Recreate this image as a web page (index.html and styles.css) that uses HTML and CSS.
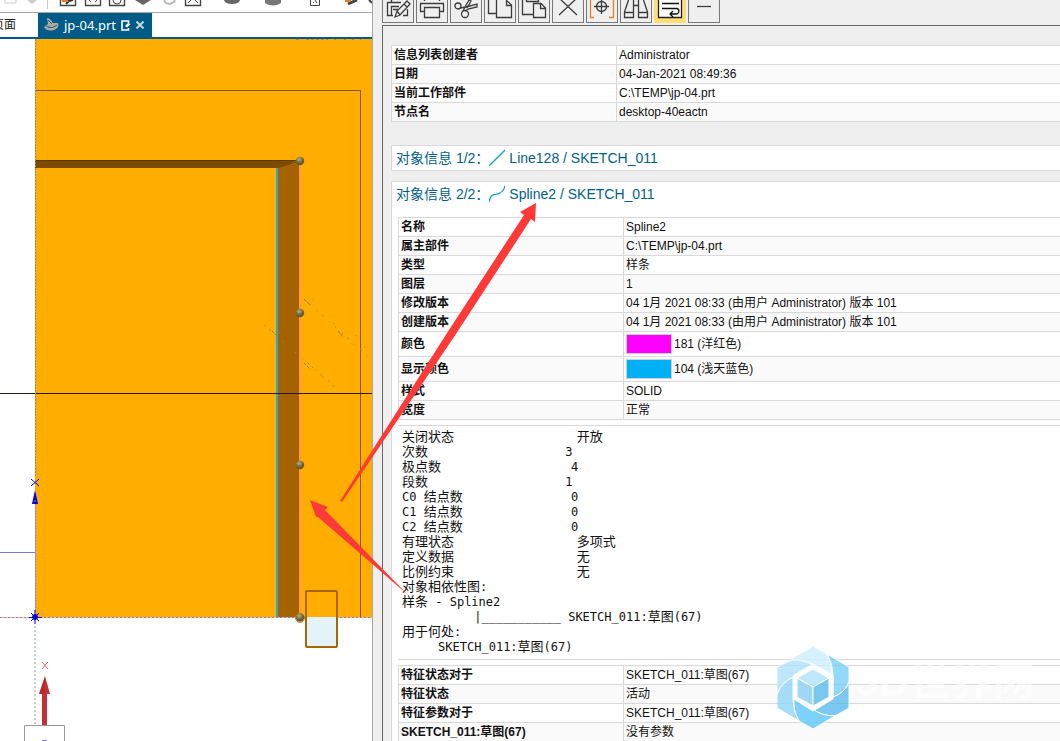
FILE: index.html
```
<!DOCTYPE html>
<html lang="zh-CN">
<head>
<meta charset="utf-8">
<title>jp-04.prt</title>
<link rel="stylesheet" href="styles.css">
</head>
<body>
<div class="app">
  <section class="modeler">
    <div class="ribbon">
      <svg width="372" height="12" viewBox="0 0 372 12" fill="none" aria-hidden="true">
        <path d="M5 0V3H16V0" stroke="#ccc"/>
        <path d="M27 0L32 4L37 0Z" fill="#ccc"/>
        <path d="M47.500 0V9" stroke="#ccc"/>
        <path d="M60.500 0V5.500H75.500V0M85.500 0V5.500H100.500V0M109.500 0V5.500H124.500V0M185.500 0V5.500H200.500V0" stroke="#444" stroke-width="1.400"/>
        <path d="M66 4L69 1L73 0" stroke="#333" stroke-width="2"/>
        <path d="M62 1H68" stroke="#e87a20" stroke-width="2"/>
        <path d="M89 0L91 2M97 0L95 2M188 3L191 0M198 3L195 0" stroke="#444"/>
        <path d="M113 0A4 4 0 0 0 121 0" stroke="#444"/>
        <path d="M135 0L143 5L151 0Z" fill="#666"/>
        <path d="M164 0L166 3L170 4L174 2L175 0" stroke="#bbb" stroke-width="2"/>
        <path d="M224 0Q225 4 232 4T240 0Z" fill="#666"/>
        <path d="M265 0V3Q273 8 281 3V0Z" fill="#777"/>
        <path d="M310.500 0V5.500H319.500V0M313 3L314 2M315 0L317 3" stroke="#444"/>
        <path d="M348 4L357 0" stroke="#444" stroke-width="3"/>
        <path d="M345 1H351" stroke="#e87a20" stroke-width="2"/>
        <path d="M369 0L372 3" stroke="#444" stroke-width="2"/>
      </svg>
    </div>
    <nav class="tabs">
      <a class="tab" href="#page">页面</a>
      <a class="tab active" href="#part">
        <svg width="15" height="14" viewBox="0 0 15 14" aria-hidden="true"><path d="M3 0Q6 0 9 5L14 5Q16 9 10 12Q3 14 0 9L4 6Z" fill="#a8aaac"/><path d="M4 2L8 6M4 9Q9 11 13 7M2 8L6 10" stroke="#555" fill="none"/></svg>
        <span>jp-04.prt</span>
        <svg width="10" height="11" viewBox="0 0 10 11" fill="none" aria-hidden="true"><path d="M7.500 3V1H1V10H7.500V8" stroke="#fff" stroke-width="1.600"/><path d="M4 6L7 3L9.500 4L6 7.500Z" fill="#fff"/></svg>
        <svg width="8" height="8" viewBox="0 0 8 8" aria-hidden="true"><path d="M0.500 0.500L7.500 7.500M7.500 0.500L0.500 7.500" stroke="#c4d5dd" stroke-width="2"/></svg>
      </a>
    </nav>
    <div class="viewport">
      <svg width="372" height="702" viewBox="0 39 372 702" fill="none" role="img" aria-label="零件视图">
        <defs><radialGradient id="ball" cx=".4" cy=".3"><stop offset="0" stop-color="#b8ad78"/><stop offset="1" stop-color="#655b34"/></radialGradient></defs>
        <rect x="35" y="39" width="337" height="578" fill="#ffae00"/>
        <path d="M296 39.500H300M306 39.500H328M334 39.500H336M344 39.500H346M352 39.500H354M360 39.500H361" stroke="#a78c58" stroke-dasharray="3 2"/>
        <path d="M35 90.500H360.500V617" stroke="#87570a"/>
        <path d="M35 160H299L280 168H35Z" fill="#7d4a00"/>
        <path d="M35 160.500H299M280 168L299 161" stroke="#5c3900"/>
        <path d="M278 168L299 162V617H278Z" fill="#a46200"/>
        <path d="M277 168V617" stroke="#25a7e0" stroke-width="2"/>
        <path d="M300 162V617" stroke="#ff9848" stroke-width="2"/>
        <path d="M0 393.500H372" stroke="#241b0b"/>
        <g stroke="#98835d" stroke-dasharray="1 6 2 8">
          <path d="M304 299L368 356M264 325L334 386"/>
          <path d="M333 323L356 348M312 367L335 388M356 335L371 356" stroke-dasharray="1 13"/>
        </g>
        <path d="M304 299L310 305M338 331L343 337M304 363L310 369M272 331L278 337" stroke="#887c66" stroke-dasharray="3 1"/>
        <path d="M35.500 39V476" stroke="#8a8877" stroke-dasharray="2 1"/>
        <path d="M35.500 500V612" stroke="#8880ff"/>
        <path d="M35.500 500V612" stroke="#aaa" stroke-dasharray="1 2"/>
        <path d="M0 552.500H35" stroke="#7777ff"/>
        <path d="M0 617.500H372" stroke="#ffb09a"/>
        <path d="M0 617.500H372" stroke="#8985bb" stroke-dasharray="2 2"/>
        <path d="M35 626V724" stroke="#c4d4c4" stroke-width="2" stroke-dasharray="2 2"/>
        <path d="M31 479L39 486M39 479L31 486M29 617.500H42M35 610V624M31 613L39 621M39 613L31 621" stroke="#0000ee"/>
        <path d="M35 490L38 504H32Z" fill="#0000e8"/><path d="M35 500V502" stroke="#d69f23"/>
        <circle cx="35" cy="617" r="2.500" fill="#111196" stroke="#0000e8"/>
        <path d="M42 662L48 669M48 662L42 669" stroke="#d46464"/>
        <path d="M45 676L50 694H47V725H42V694H39Z" fill="#c43036"/>
        <path d="M45 676V694H39Z" fill="#9e282e" fill-opacity=".4"/>
        <path d="M24.500 741V725.500H64.500V741" fill="#fff" stroke="#999"/>
        <path d="M42 741H47" stroke="#7777ff" stroke-width="2"/>
        <rect x="306" y="617" width="31" height="30" fill="#e4f3f7"/>
        <rect x="306" y="591" width="31" height="56" rx="1" stroke="#a66600" stroke-width="2"/>
        <circle cx="300" cy="618" r="4.500" stroke="#d07820"/>
        <g fill="url(#ball)"><circle cx="300" cy="161" r="4.200"/><circle cx="300" cy="313" r="4.200"/><circle cx="300" cy="465" r="4.200"/><circle cx="300" cy="617.500" r="4.200"/></g>
      </svg>
    </div>
  </section>

  <section class="info">
    <div class="toolbar">
      <button aria-label="编辑"><svg viewBox="0 0 30 22"><path d="M4.500 2V15.500H10M24.500 9V15.500H20M4.500 2.500H8.500V0M8.500 2.500H18M8.500 15V6.500H16M10 9.500H15"/><path d="M12 17L14 11L24 1L27 4L17 15ZM14 11L17 15M21 4L24 7" fill="#efefef"/></svg></button>
      <button aria-label="打印"><svg viewBox="0 0 30 22"><path d="M7 11.500H3.500V3.500H26.500V11.500H23M7.500 7.500H22.500V17.500H7.500ZM7.500 0V1M22.500 0V1"/></svg></button>
      <button aria-label="剪切"><svg viewBox="0 0 30 22"><circle cx="7" cy="6" r="3"/><circle cx="14" cy="14" r="3.500"/><path d="M9 8L15 7L26 4V7L17 9L14 11M12 11L14 7L18 0L20 1L16 8"/></svg></button>
      <button aria-label="复制"><svg viewBox="0 0 30 22"><path d="M11 13.500H3.500V0M11.500 0V17.500H26.500V5L21 0M21.500 0V5.500H26"/></svg></button>
      <button aria-label="粘贴"><svg viewBox="0 0 30 22"><path d="M14 14.500H3.500V0M19.500 0V1.500H7.500V0M14.500 17.500V3.500H22L26.500 8V17.500ZM21.500 4V8.500H26"/></svg></button>
      <button aria-label="删除"><svg viewBox="0 0 30 22"><path d="M6 -2L24 15M24 -2L6 15"/></svg></button>
      <button aria-label="定位"><svg viewBox="0 0 30 22"><circle cx="14.500" cy="6.500" r="5"/><path d="M7 6.500H22M14.500 0V14"/><path d="M7 17.500H3.500V0M22 17.500H26.500V0" stroke="#e78022"/></svg></button>
      <button aria-label="查找"><svg viewBox="0 0 30 22"><path d="M3.500 12L7.500 0M3.500 12.500H12.500V17.500H3.500ZM12.500 13V0M17.500 0V17.500H26.500V12.500H17.500M26.500 12L22.500 0M13 5.500H17"/></svg></button>
      <button class="on" aria-label="自动换行"><svg viewBox="0 0 30 22"><path d="M3.500 -1H26.500V17.500H3.500Z" fill="#fff" stroke="#222"/><path d="M7 3.500H24M7 8.500H22Q24 9 24 11T22 14H15M18 11L15 14L18 17" stroke="#111"/></svg></button>
      <button aria-label="最小化"><svg viewBox="0 0 30 22"><path d="M8 6.500H22"/></svg></button>
    </div>
    <main class="listing">
      <table class="props">
        <tr><th scope="row">信息列表创建者</th><td>Administrator</td></tr>
        <tr><th scope="row">日期</th><td>04-Jan-2021 08:49:36</td></tr>
        <tr><th scope="row">当前工作部件</th><td>C:\TEMP\jp-04.prt</td></tr>
        <tr><th scope="row">节点名</th><td>desktop-40eactn</td></tr>
      </table>
      <article class="card">
        <h2><span>对象信息 1/2：</span><svg width="16" height="18" viewBox="0 0 16 18" aria-hidden="true"><path d="M0 17L16 1"/></svg><span>Line128 / SKETCH_011</span></h2>
      </article>
      <article class="card">
        <h2><span>对象信息 2/2：</span><svg width="16" height="18" viewBox="0 0 16 18" aria-hidden="true"><path d="M0 17C2 7 6 11 11 8Q15 6 16 1"/></svg><span>Spline2 / SKETCH_011</span></h2>
        <div class="details">
        <table class="props">
          <tr><th scope="row">名称</th><td>Spline2</td></tr>
          <tr><th scope="row">属主部件</th><td>C:\TEMP\jp-04.prt</td></tr>
          <tr><th scope="row">类型</th><td>样条</td></tr>
          <tr><th scope="row">图层</th><td>1</td></tr>
          <tr><th scope="row">修改版本</th><td>04 1月 2021 08:33 (由用户 Administrator) 版本 101</td></tr>
          <tr><th scope="row">创建版本</th><td>04 1月 2021 08:33 (由用户 Administrator) 版本 101</td></tr>
          <tr class="color"><th scope="row">颜色</th><td><div class="pick"><i class="swatch magenta"></i>181 (洋红色)</div></td></tr>
          <tr class="color"><th scope="row">显示颜色</th><td><div class="pick"><i class="swatch sky"></i>104 (浅天蓝色)</div></td></tr>
          <tr><th scope="row">样式</th><td>SOLID</td></tr>
          <tr><th scope="row">宽度</th><td>正常</td></tr>
        </table>
<pre class="report"><b>关闭状态</b>                 <b>开放</b>
<b>次数</b>                   3
<b>极点数</b>                  4
<b>段数</b>                   1
C0 <b>结点数</b>               0
C1 <b>结点数</b>               0
C2 <b>结点数</b>               0
<b>有理状态</b>                 <b>多项式</b>
<b>定义数据</b>                 <b>无</b>
<b>比例约束</b>                 <b>无</b>
<b>对象相依性图</b>:
<b>样条</b> - Spline2
          |___________ SKETCH_011:<b>草图</b>(67)
<b>用于何处</b>:
     SKETCH_011:<b>草图</b>(67)</pre>
        <table class="props">
          <tr><th scope="row">特征状态对于</th><td>SKETCH_011:草图(67)</td></tr>
          <tr><th scope="row">特征状态</th><td>活动</td></tr>
          <tr><th scope="row">特征参数对于</th><td>SKETCH_011:草图(67)</td></tr>
          <tr><th scope="row">SKETCH_011:草图(67)</th><td>没有参数</td></tr>
        </table>
        </div>
      </article>
    </main>
  </section>

  <svg class="markup" width="1060" height="741" viewBox="0 0 1060 741" aria-hidden="true">
    <g fill="#fd3a38">
      <path d="M340 501L447 333L524 215L520 212L536 203L535 222L531 219L454 337L342 502Z"/>
      <path d="M408 595L318 517L316 517L310 500L328 507L325 510Z"/>
    </g>
  </svg>
  <div class="watermark">
    <svg width="72" height="83" viewBox="0 0 72 83" aria-hidden="true">
      <g opacity=".8" stroke="#fff" stroke-width="1">
        <path d="M14 13L36 0L50 8Q55 18 55 29L36 18Q26 13 14 13Z" fill="#cdeeff"/>
        <path d="M50 8L72 21V36Q68 47 56 51V29Q56 18 50 8Z" fill="#77cff8"/>
        <path d="M72 36V62L58 70Q46 70 37 64L56 51Q68 47 72 36Z" fill="#5bbcec"/>
        <path d="M58 70L36 83L22 75Q16 65 17 53L37 64Q46 70 58 70Z" fill="#5dc7fa"/>
        <path d="M22 75L0 62V48Q4 37 16 31V53Q16 65 22 75Z" fill="#91d6f8"/>
        <path d="M0 48V21L14 14Q26 13 36 19L16 31Q4 37 0 48Z" fill="#aee2fc"/>
        <path d="M36 18L56 29V53L36 65L17 53V29Z" fill="#fff"/>
        <path d="M36 23L52 32L36 41L20 32Z" fill="#aee2fc"/>
        <path d="M20 32L36 41V60L20 51Z" fill="#8bd1f5"/>
        <path d="M52 32L36 41V60L52 51Z" fill="#5bbcec"/>
      </g>
    </svg>
    <span>3D世界网</span>
  </div>
</div>
</body>
</html>
```
FILE: styles.css
```
* { box-sizing: border-box; }

body {
  margin: 0;
  background: #efefef;
  color: #111;
  font: 12px/18px "Liberation Sans", "Noto Sans CJK SC", sans-serif;
}

.app {
  position: relative;
  display: flex;
  gap: 9px;
  height: 100vh;
  overflow: hidden;
}

svg { display: block; flex: none; }

.modeler {
  display: flex;
  flex-direction: column;
  flex: 0 0 373px;
  overflow: hidden;
  background: #fff;
  border-right: 1px solid #a6a6a6;
}

.ribbon { border-bottom: 1px solid #a9a9a9; }

.tabs {
  display: flex;
  height: 26px;
  border-bottom: 2px solid #005b86;
}

.tab {
  display: flex;
  align-items: center;
  width: 38px;
  padding-right: 22px;
  justify-content: flex-end;
  color: #222;
  font-size: 12px;
  text-decoration: none;
  white-space: nowrap;
}

.tab.active {
  width: 114px;
  padding: 0 6px;
  gap: 5px;
  justify-content: flex-start;
  background: #005b86;
  color: #fff;
  font: 13px/18px "Noto Sans", sans-serif;
}

.viewport { flex: 1; min-height: 0; overflow: hidden; }

.info {
  display: flex;
  flex-direction: column;
  flex: 1;
  min-width: 0;
}

.toolbar {
  display: flex;
  gap: 2px;
  padding-bottom: 2px;
}

.toolbar button {
  width: 32px;
  height: 23px;
  padding: 0;
  background: #efefef;
  border: 1px solid #777;
  border-top: 0;
}

.toolbar button.on { background: #ffdf75; border-color: #ffdf75; }

.toolbar svg {
  width: 30px;
  height: 22px;
  fill: none;
  stroke: #3c3c3c;
  stroke-width: 1.3;
}

.listing {
  flex: 1;
  min-height: 0;
  overflow: hidden;
  padding: 19px 0 0 8px;
  border-top: 1px solid #666;
  border-left: 1px solid #666;
}

.props {
  width: 100%;
  border-collapse: collapse;
  table-layout: fixed;
  background: #fff;
}

.props tr { height: 19px; }
.props tr:nth-child(even) { background: #fafafa; }
.props tr.color { height: 25px; }

.props th,
.props td {
  padding: 0 2px;
  border: 1px solid #d9d9d9;
  border-right: 0;
  line-height: 18px;
  text-align: left;
  white-space: nowrap;
}

.props th { width: 225px; font-weight: bold; }

.pick { display: flex; gap: 2px; line-height: 20px; }

.swatch { width: 46px; height: 20px; border: 1px solid #d0d0d0; }
.magenta { background: #f0f; }
.sky { background: #00b0f4; }

.card {
  margin-top: 10px;
  background: #fff;
  border: 1px solid #d9d9d9;
  border-right: 0;
}

.props + .card { margin-top: 23px; }

.card h2 {
  display: flex;
  align-items: center;
  margin: 0;
  padding-left: 4px;
  color: #005f87;
  font-size: 14px;
  font-weight: normal;
  line-height: 24px;
  white-space: nowrap;
}

.card h2 svg {
  margin-right: 4px;
  fill: none;
  stroke: #12a8c6;
  stroke-width: 1.3;
}

.details { padding: 11px 0 0 6px; }

.report {
  margin: 5px 0;
  padding: 4px 0 4px 4px;
  border-top: 1px solid #d9d9d9;
  border-bottom: 1px solid #d9d9d9;
  font: 12px/15px "DejaVu Sans Mono", "Noto Sans CJK SC", monospace;
}

.report b {
  font: 13px/1px "Noto Sans CJK SC", sans-serif;
}

.markup {
  position: absolute;
  top: 0;
  left: 0;
  pointer-events: none;
}

.watermark {
  position: absolute;
  right: 25px;
  bottom: 12px;
  display: flex;
  align-items: center;
  gap: 6px;
  color: #fff;
  font-size: 42px;
  font-weight: bold;
  line-height: 40px;
  white-space: nowrap;
  pointer-events: none;
}

.watermark span { padding-bottom: 12px; opacity: .6; }
```
